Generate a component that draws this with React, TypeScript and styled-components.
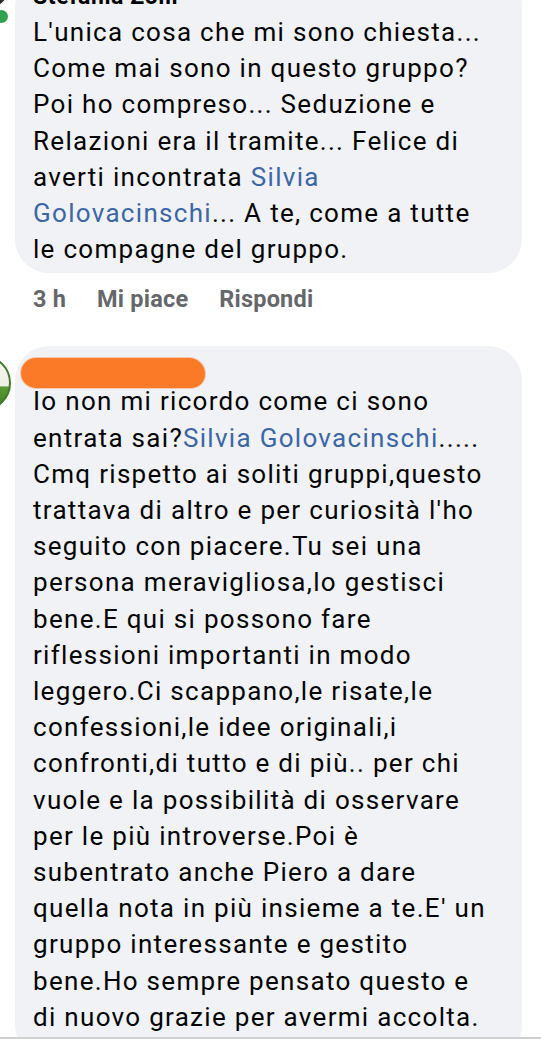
import React from "react";
import styled, { createGlobalStyle } from "styled-components";

const Global = createGlobalStyle`
  html, body { margin: 0; padding: 0; background: #ffffff; }
  body { font-family: Roboto, "Noto Sans", "Liberation Sans", sans-serif; }
  * { box-sizing: border-box; }
`;

const Screen = styled.div`
  width: 541px;
  height: 1044px;
  overflow: hidden;
  background: #ffffff;
  display: flex;
  flex-direction: column;
`;

const Viewport = styled.div`
  height: 1037px;
  overflow: hidden;
  flex-shrink: 0;
  padding-right: 19px;
`;

const BottomRule = styled.div`
  height: 2px;
  background: #cfd0d2;
  flex-shrink: 0;
`;

const CommentRow = styled.div<{ $offset?: number }>`
  display: flex;
  align-items: flex-start;
  gap: 4px;
  margin-top: ${(p) => p.$offset ?? 0}px;
`;

const Avatar = styled.div<{ $tone: "dark" | "leaf"; $top: number }>`
  position: relative;
  flex-shrink: 0;
  width: 56px;
  height: 56px;
  margin-left: -45px;
  margin-top: ${(p) => p.$top}px;
  border-radius: 50%;
  background: ${(p) =>
    p.$tone === "dark"
      ? "#2b2b2d"
      : "linear-gradient(180deg, #f6f6f1 0%, #eef0e6 55%, #5a9a33 58%, #3d7d22 100%)"};
  border: ${(p) => (p.$tone === "leaf" ? "2px solid #3f7a2a" : "none")};
`;

const OnlineDot = styled.span`
  position: absolute;
  right: 1px;
  bottom: -15px;
  width: 17px;
  height: 17px;
  border-radius: 50%;
  background: #31a24c;
  border: 2px solid #ffffff;
`;

const Column = styled.div`
  flex: 1;
  min-width: 0;
  display: flex;
  flex-direction: column;
`;

const Bubble = styled.div<{ $padTop: number; $padBottom: number }>`
  background: #f0f2f5;
  border-radius: 34px;
  padding: ${(p) => p.$padTop}px 12px ${(p) => p.$padBottom}px 18px;
`;

const AuthorName = styled.div`
  position: relative;
  height: 28px;
  margin-bottom: 3px;
  font-size: 23px;
  line-height: 28px;
  font-weight: 700;
  letter-spacing: 0.6px;
  color: #050505;
  white-space: nowrap;
`;

const Redaction = styled.span`
  position: absolute;
  left: -12px;
  top: 6px;
  width: 184px;
  height: 30px;
  background: #fb7a28;
  border-radius: 15px 16px 14px 15px;
  box-shadow: 0 0 0 1px rgba(251, 122, 40, 0.35);
`;

const Body = styled.div`
  font-size: 26px;
  line-height: 36.2px;
  letter-spacing: 1.3px;
  color: #050505;
  font-weight: 400;
  white-space: nowrap;
`;

const Mention = styled.span`
  color: #3b67a8;
`;

const Actions = styled.div`
  display: flex;
  gap: 31px;
  margin-top: 11px;
  margin-bottom: 32px;
  padding-left: 18px;
  font-size: 23.5px;
  line-height: 30px;
  letter-spacing: 0.2px;
  font-weight: 700;
  color: #65676b;
`;

const Time = styled.span`
  font-weight: 700;
`;

type Seg = string | { link: string };
type Line = Seg[];

const renderLines = (lines: Line[]) =>
  lines.map((line, i) => (
    <React.Fragment key={i}>
      {line.map((s, j) =>
        typeof s === "string" ? (
          <React.Fragment key={j}>{s}</React.Fragment>
        ) : (
          <Mention key={j}>{s.link}</Mention>
        )
      )}
      {i < lines.length - 1 && <br />}
    </React.Fragment>
  ));

const first: Line[] = [
  ["L'unica cosa che mi sono chiesta..."],
  ["Come mai sono in questo gruppo?"],
  ["Poi ho compreso... Seduzione e"],
  ["Relazioni era il tramite... Felice di"],
  ["averti incontrata ", { link: "Silvia" }],
  [{ link: "Golovacinschi" }, "... A te, come a tutte"],
  ["le compagne del gruppo."],
];

const second: Line[] = [
  ["Io non mi ricordo come ci sono"],
  ["entrata sai?", { link: "Silvia Golovacinschi" }, "....."],
  ["Cmq rispetto ai soliti gruppi,questo"],
  ["trattava di altro e per curiosità l'ho"],
  ["seguito con piacere.Tu sei una"],
  ["persona meravigliosa,lo gestisci"],
  ["bene.E qui si possono fare"],
  ["riflessioni importanti in modo"],
  ["leggero.Ci scappano,le risate,le"],
  ["confessioni,le idee originali,i"],
  ["confronti,di tutto e di più.. per chi"],
  ["vuole e la possibilità di osservare"],
  ["per le più introverse.Poi è"],
  ["subentrato anche Piero a dare"],
  ["quella nota in più insieme a te.E' un"],
  ["gruppo interessante e gestito"],
  ["bene.Ho sempre pensato questo e"],
  ["di nuovo grazie per avermi accolta."],
];

export default function App() {
  return (
    <>
      <Global />
      <Screen>
        <Viewport>
          <CommentRow $offset={-27}>
            <Avatar $tone="dark" $top={-19}>
              <OnlineDot />
            </Avatar>
            <Column>
              <Bubble $padTop={10} $padBottom={6}>
                <AuthorName>Stefania Zolli</AuthorName>
                <Body>{renderLines(first)}</Body>
              </Bubble>
              <Actions>
                <Time>3 h</Time>
                <span>Mi piace</span>
                <span>Rispondi</span>
              </Actions>
            </Column>
          </CommentRow>
          <CommentRow>
            <Avatar $tone="leaf" $top={9} />
            <Column>
              <Bubble $padTop={6} $padBottom={24}>
                <AuthorName>
                  <Redaction />
                </AuthorName>
                <Body>{renderLines(second)}</Body>
              </Bubble>
            </Column>
          </CommentRow>
        </Viewport>
        <BottomRule />
      </Screen>
    </>
  );
}
